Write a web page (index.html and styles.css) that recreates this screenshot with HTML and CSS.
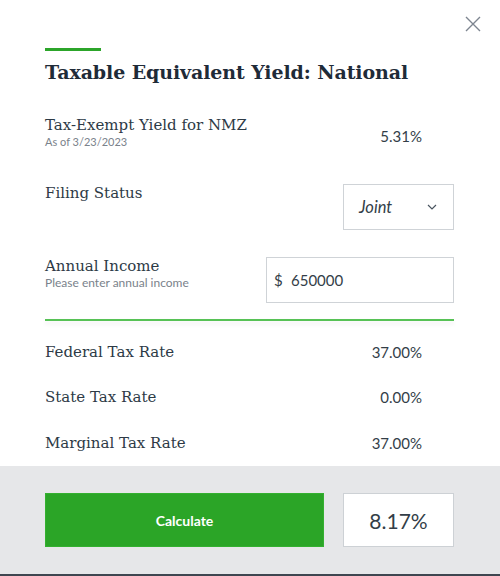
FILE: index.html
```html
<!DOCTYPE html>
<html>
<head>
<meta charset="utf-8">
<link rel="stylesheet" href="styles.css">
</head>
<body>
<div class="modal">
  <button class="close" aria-label="Close">
    <svg width="16" height="16" viewBox="0 0 16 16"><path d="M1 1L15 15M15 1L1 15" stroke="#7d8590" stroke-width="1.4" fill="none"/></svg>
  </button>
  <div class="content">
    <div class="accent"></div>
    <h1 class="title">Taxable Equivalent Yield: National</h1>

    <div class="row row-yield">
      <div class="label-block">
        <div class="label">Tax-Exempt Yield for NMZ</div>
        <div class="hint">As of 3/23/2023</div>
      </div>
      <div class="value">5.31%</div>
    </div>

    <div class="row row-filing">
      <div class="label-block">
        <div class="label">Filing Status</div>
      </div>
      <div class="select">
        <span class="select-text">Joint</span>
        <svg class="chev" width="10" height="6" viewBox="0 0 10 6"><path d="M1 1L5 5L9 1" stroke="#4a5560" stroke-width="1.2" fill="none"/></svg>
      </div>
    </div>

    <div class="row row-income">
      <div class="label-block">
        <div class="label">Annual Income</div>
        <div class="hint hint-wide">Please enter annual income</div>
      </div>
      <div class="input">
        <span class="dollar">$</span>
        <span class="input-text">650000</span>
      </div>
    </div>

    <div class="divider"></div>

    <div class="rates">
      <div class="rate-row">
        <div class="label">Federal Tax Rate</div>
        <div class="value">37.00%</div>
      </div>
      <div class="rate-row">
        <div class="label">State Tax Rate</div>
        <div class="value">0.00%</div>
      </div>
      <div class="rate-row">
        <div class="label">Marginal Tax Rate</div>
        <div class="value">37.00%</div>
      </div>
    </div>
  </div>
  <div class="footer">
    <button class="calc">Calculate</button>
    <div class="result">8.17%</div>
  </div>
</div>
</body>
</html>
```

FILE: styles.css
```css
html, body {
  margin: 0;
  padding: 0;
  background: #ffffff;
}
body {
  width: 500px;
  height: 576px;
  overflow: hidden;
  font-family: "Source Sans Pro", Lato, "Open Sans", sans-serif;
  color: #333e48;
}
.modal {
  position: relative;
  width: 500px;
  height: 576px;
  display: flex;
  flex-direction: column;
}
.close {
  position: absolute;
  top: 16px;
  right: 19px;
  width: 16px;
  height: 16px;
  padding: 0;
  border: 0;
  background: none;
  display: flex;
}
.content {
  padding: 48px 46px 0 45px;
  flex: 1 1 auto;
  min-height: 0;
  overflow: hidden;
}
.accent {
  width: 56px;
  height: 3px;
  background: #2ca52a;
}
.title {
  margin: 7px 0 0 0;
  font-family: "DejaVu Serif", Georgia, serif;
  font-weight: bold;
  font-size: 19px;
  line-height: 28px;
  color: #1f2b38;
  letter-spacing: -0.1px;
}
.row {
  display: flex;
  justify-content: space-between;
  align-items: flex-start;
}
.label {
  font-family: "DejaVu Serif", Georgia, serif;
  font-size: 15px;
  line-height: 20px;
  color: #2d3a46;
}
.hint {
  font-size: 11px;
  line-height: 13px;
  color: #7a828b;
}
.hint-wide {
  font-size: 12px;
}
.value {
  font-size: 15px;
  color: #333e48;
}
.row-yield {
  margin-top: 29px;
  height: 46px;
}
.row-yield .value {
  margin-top: 12px;
  margin-right: 32px;
}
.row-filing {
  margin-top: 23px;
}
.row-filing .label-block {
  margin-top: -1px;
}
.select {
  height: 44px;
  width: 93px;
  border: 1px solid #cfd3d7;
  display: flex;
  align-items: center;
  justify-content: space-between;
  padding: 0 16px 0 0;
}
.select-text {
  font-style: italic;
  font-size: 16.5px;
  padding-left: 15px;
  color: #333e48;
}
.row-income {
  margin-top: 27px;
}
.row-income .label-block {
  margin-top: -1px;
}
.input {
  width: 186px;
  height: 44px;
  border: 1px solid #cfd3d7;
  display: flex;
  align-items: center;
  font-size: 15px;
  color: #333e48;
}
.dollar {
  padding-left: 7px;
  width: 17px;
}
.divider {
  margin-top: 16px;
  height: 2px;
  background: #57c256;
  box-shadow: 0 3px 4px rgba(0,0,0,0.08);
}
.rates {
  padding-top: 8px;
}
.rate-row {
  display: flex;
  justify-content: space-between;
  align-items: center;
  height: 45.5px;
  padding-right: 32px;
}
.footer {
  flex: 0 0 110px;
  height: 110px;
  background: #e6e7e9;
  border-bottom: 2px solid #3e4650;
  box-sizing: border-box;
  display: flex;
  align-items: flex-start;
  padding: 27px 46px 0 45px;
  gap: 19px;
}
.calc {
  width: 279px;
  height: 54px;
  background: #2ba527;
  border: 1px solid #34b030;
  color: #ffffff;
  font-family: "Source Sans Pro", Lato, "Open Sans", sans-serif;
  font-weight: bold;
  font-size: 14px;
  padding: 0;
}
.result {
  flex: 1;
  height: 54px;
  box-sizing: border-box;
  background: #ffffff;
  border: 1px solid #cdd1d5;
  display: flex;
  align-items: center;
  justify-content: center;
  font-size: 21px;
  color: #333e48;
}
```
